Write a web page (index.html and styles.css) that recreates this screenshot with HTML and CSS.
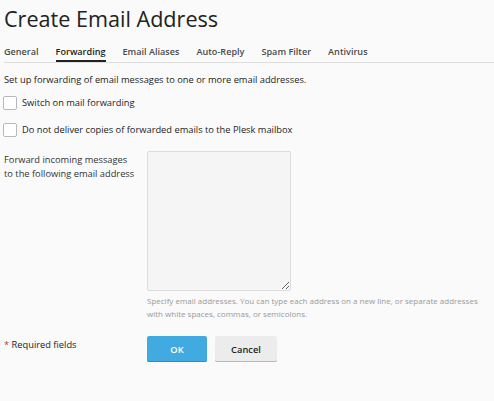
FILE: index.html
```html
<!DOCTYPE html>
<html>
<head>
<meta charset="utf-8">
<link rel="stylesheet" href="styles.css">
</head>
<body>
<div class="page">
  <h1 class="title">Create Email Address</h1>
  <nav class="tabs">
    <span class="tab">General</span>
    <span class="tab active">Forwarding</span>
    <span class="tab">Email Aliases</span>
    <span class="tab">Auto-Reply</span>
    <span class="tab">Spam Filter</span>
    <span class="tab">Antivirus</span>
  </nav>
  <p class="intro">Set up forwarding of email messages to one or more email addresses.</p>
  <label class="check"><span class="box"></span>Switch on mail forwarding</label>
  <label class="check"><span class="box"></span>Do not deliver copies of forwarded emails to the Plesk mailbox</label>
  <div class="row field-row">
    <div class="row-label">Forward incoming messages<br>to the following email address</div>
    <div class="row-field">
      <textarea class="area"></textarea>
      <div class="hint">Specify email addresses. You can type each address on a new line, or separate addresses with white spaces, commas, or semicolons.</div>
    </div>
  </div>
  <div class="row actions">
    <div class="row-label req"><span class="star">*</span> Required fields</div>
    <div class="buttons">
      <button class="btn ok">OK</button>
      <button class="btn cancel">Cancel</button>
    </div>
  </div>
</div>
</body>
</html>
```

FILE: styles.css
```css
html, body {
  margin: 0;
  padding: 0;
  background: #fafafa;
}
body {
  font-family: "Open Sans", "Liberation Sans", sans-serif;
  font-size: 9.3px;
  color: #333;
}
.page {
  padding: 0 0 0 4px;
}
.title {
  margin: 0;
  padding-top: 4px;
  font-size: 21.6px;
  font-weight: 400;
  line-height: 30px;
  color: #222;
}
.tabs {
  display: flex;
  gap: 17px;
  margin-top: 11px;
  border-bottom: 1px solid #dedede;
}
.tab {
  font-size: 9.1px;
  font-weight: 600;
  color: #4a4a4a;
  line-height: 14px;
  padding-bottom: 1px;
  border-bottom: 2px solid transparent;
}
.tab.active {
  color: #222;
  border-bottom-color: #222;
}
.intro {
  margin: 10px 0 0;
  line-height: 14px;
  color: #222;
}
.check {
  display: flex;
  align-items: center;
  gap: 5px;
  margin-top: 9px;
  margin-left: -1px;
  line-height: 14px;
  color: #222;
}
.check + .check { margin-top: 13px; }
.box {
  width: 12px;
  height: 12px;
  border: 1px solid #b8b8b8;
  border-radius: 2px;
  background: #fff;
}
.row {
  display: flex;
}
.field-row { margin-top: 14px; }
.row-label {
  width: 143px;
  flex: none;
  line-height: 14px;
  padding-top: 2px;
  color: #333;
}
.row-field {
  flex: 1;
  padding-right: 7px;
}
.area {
  display: block;
  box-sizing: border-box;
  width: 144px;
  height: 140px;
  margin: 0;
  background: #f5f5f5;
  border: 1px solid #dcdcdc;
  border-radius: 2px;
}
.hint {
  margin-top: 3px;
  font-size: 8px;
  line-height: 13px;
  color: #999;
}
.actions {
  margin-top: 16px;
}
.req { padding-top: 2px; color: #222; }
.star { color: #c0392b; }
.buttons {
  display: flex;
  gap: 8px;
}
.btn {
  font-family: "Open Sans", "Liberation Sans", sans-serif;
  font-size: 9.3px;
  font-weight: 600;
  height: 26px;
  border: none;
  border-radius: 2px;
  padding: 0;
}
.ok {
  width: 60px;
  background: #41aae0;
  color: #fff;
  box-shadow: inset 0 -1px 0 #2d8dbf;
}
.cancel {
  width: 62px;
  background: #ececec;
  color: #222;
  box-shadow: inset 0 -1px 0 #b8b8b8;
}
```
